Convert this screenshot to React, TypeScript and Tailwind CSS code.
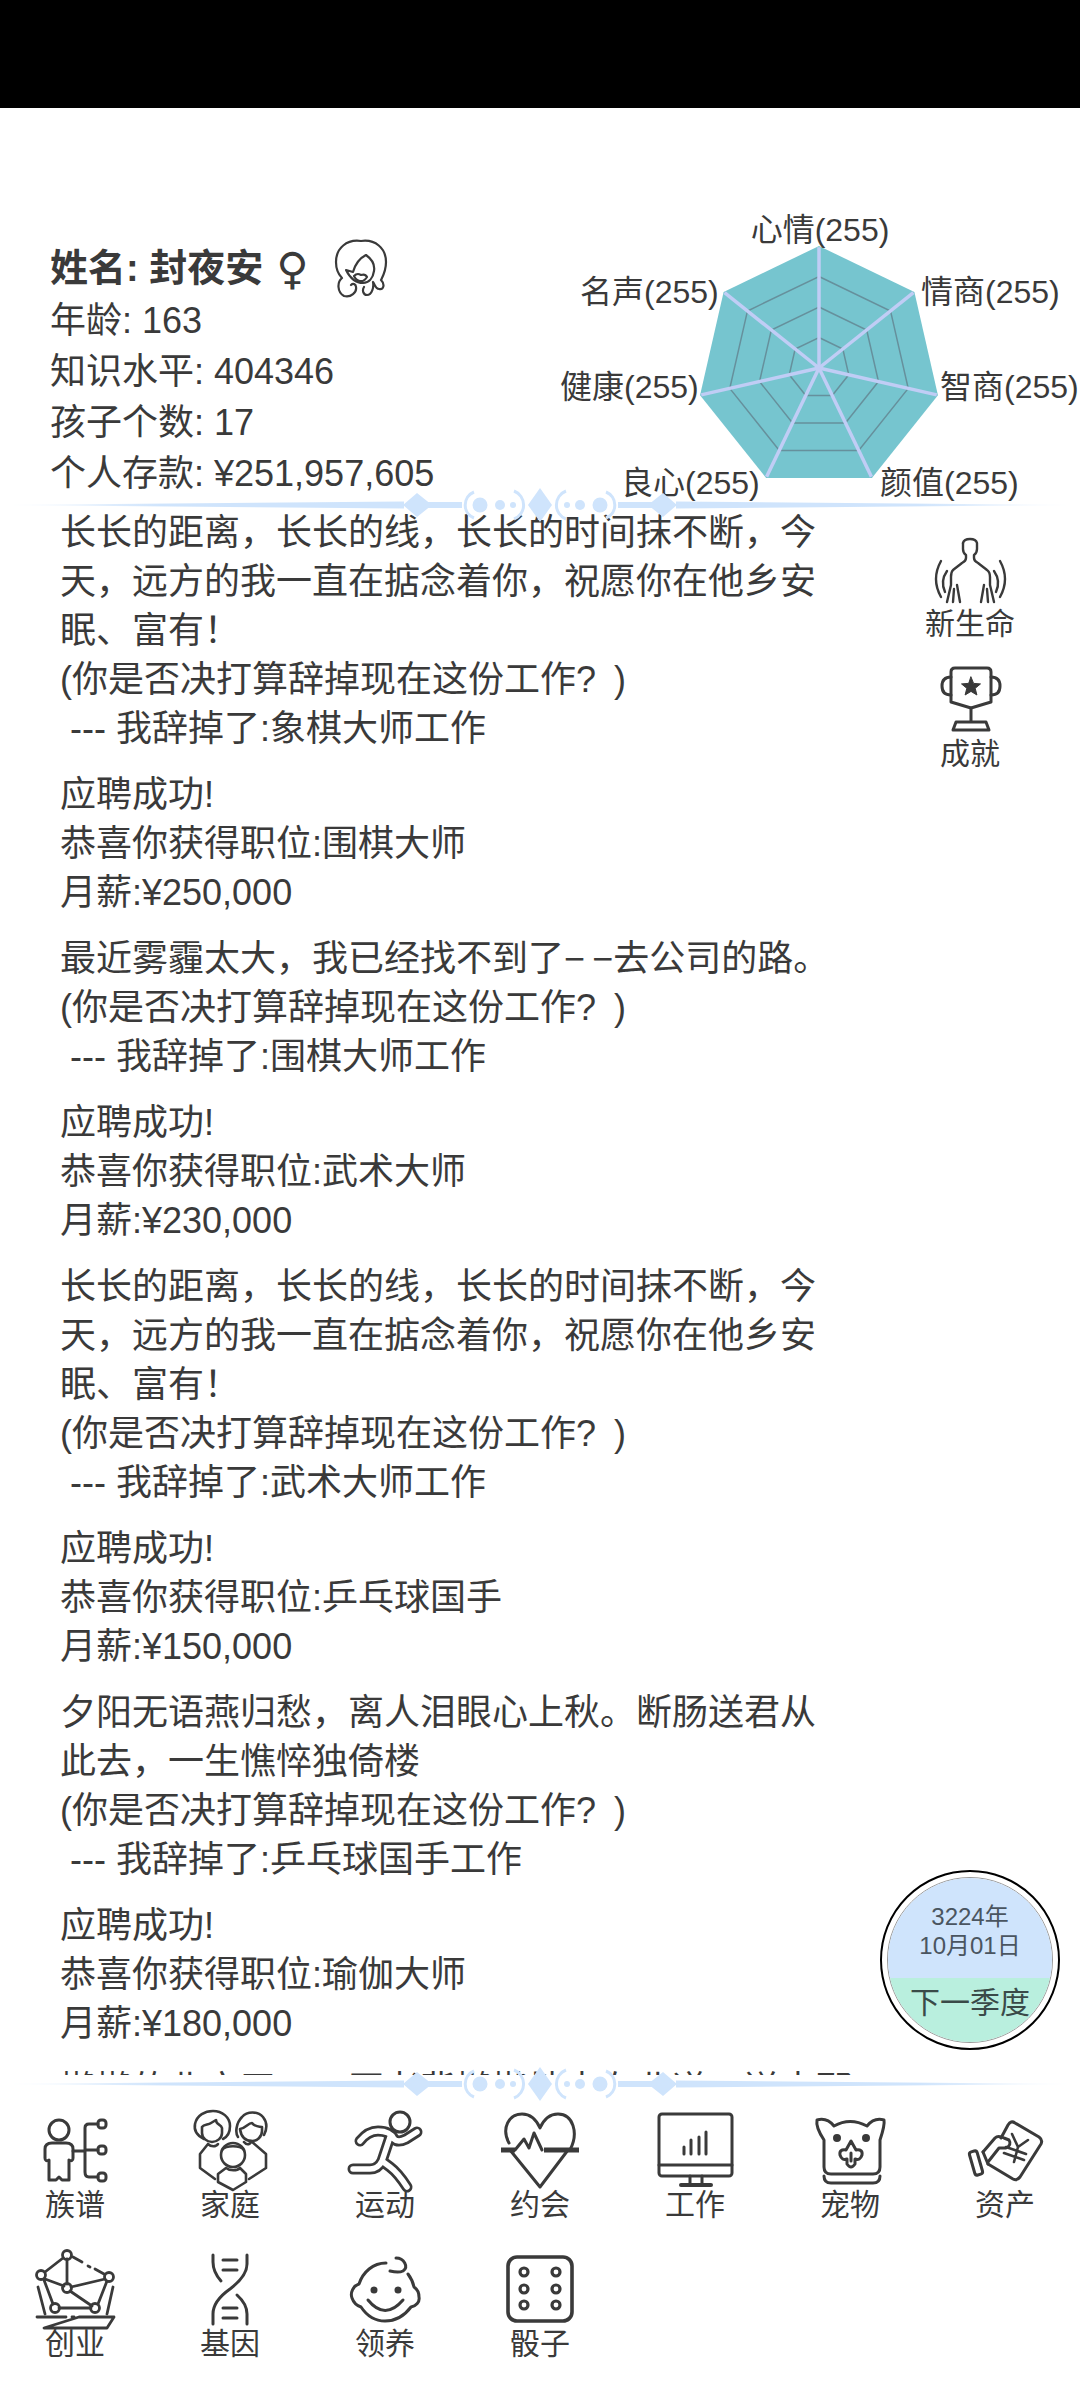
import type { ReactNode } from "react";

const RADAR_LABELS = [
  { text: "心情(255)", x: 280, y: 51, anchor: "middle" },
  { text: "情商(255)", x: 381, y: 113, anchor: "start" },
  { text: "智商(255)", x: 400, y: 208, anchor: "start" },
  { text: "颜值(255)", x: 340, y: 304, anchor: "start" },
  { text: "良心(255)", x: 81, y: 304, anchor: "start" },
  { text: "健康(255)", x: 20, y: 208, anchor: "start" },
  { text: "名声(255)", x: 40, y: 113, anchor: "start" },
];

const ASK = "(你是否决打算辞掉现在这份工作?\u2002)";

const LOG_BLOCKS = [
  ["长长的距离，长长的线，长长的时间抹不断，今", "天，远方的我一直在掂念着你，祝愿你在他乡安", "眠、富有！", ASK, " --- 我辞掉了:象棋大师工作"],
  ["应聘成功!", "恭喜你获得职位:围棋大师", "月薪:¥250,000"],
  ["最近雾霾太大，我已经找不到了−\u2009−去公司的路。", ASK, " --- 我辞掉了:围棋大师工作"],
  ["应聘成功!", "恭喜你获得职位:武术大师", "月薪:¥230,000"],
  ["长长的距离，长长的线，长长的时间抹不断，今", "天，远方的我一直在掂念着你，祝愿你在他乡安", "眠、富有！", ASK, " --- 我辞掉了:武术大师工作"],
  ["应聘成功!", "恭喜你获得职位:乒乓球国手", "月薪:¥150,000"],
  ["夕阳无语燕归愁，离人泪眼心上秋。断肠送君从", "此去，一生憔悴独倚楼", ASK, " --- 我辞掉了:乒乓球国手工作"],
  ["应聘成功!", "恭喜你获得职位:瑜伽大师", "月薪:¥180,000"],
  ["懒懒的北方天，一匹老背懒懒地走在北道，送走那"],
];

const CX = 279;
const CY = 178;
const R = 122;

const point = (i: number, scale: number) => {
  const a = (i * 2 * Math.PI) / 7;
  return [CX + R * scale * Math.sin(a), CY - R * scale * Math.cos(a)];
};

const ring = (scale: number) =>
  [0, 1, 2, 3, 4, 5, 6].map((i) => point(i, scale).join(",")).join(" ");

const Radar = () => (
  <svg width="540" height="320" viewBox="0 0 540 320" className="mt-[82px] shrink-0 overflow-visible">
    <polygon points={ring(1)} fill="#76c5cf" />
    {[0.25, 0.5, 0.75].map((s) => (
      <polygon key={s} points={ring(s)} fill="none" stroke="#66909c" strokeWidth="1.5" />
    ))}
    {[0, 1, 2, 3, 4, 5, 6].map((i) => {
      const [x, y] = point(i, 0.99);
      return <line key={i} x1={CX} y1={CY} x2={x} y2={y} stroke="#c0cdf5" strokeWidth="3.5" />;
    })}
    {RADAR_LABELS.map((l) => (
      <text key={l.text} x={l.x} y={l.y} textAnchor={l.anchor} fill="#3a3a3a" className="text-[32px]">
        {l.text}
      </text>
    ))}
  </svg>
);

// mirrored ornament; only the left half is described
const DividerHalf = ({ id }: { id: string }) => (
  <g>
    <polygon points="0,20 404,16.5 404,23.5" fill={`url(#${id})`} />
    <polygon points="403,20 417,8 432,20 417,32" fill="#cfe4fc" />
    <rect x="428" y="17" width="34" height="6" fill="#cfe4fc" />
    <path d="M474 7 A14 14 0 0 0 474 33" fill="none" stroke="#cfe4fc" strokeWidth="3" />
    <circle cx="480" cy="20" r="7.5" fill="#cfe4fc" />
    <circle cx="500" cy="20" r="5" fill="#cfe4fc" />
    <circle cx="513" cy="20" r="3" fill="#cfe4fc" />
    <path d="M514 6 A15 15 0 0 1 514 34" fill="none" stroke="#cfe4fc" strokeWidth="3" />
  </g>
);

const Divider = ({ id }: { id: string }) => (
  <div className="relative z-10 h-[2px]">
    <svg width="1080" height="40" viewBox="0 0 1080 40" className="absolute left-0 top-[-19px]">
      <defs>
        <linearGradient id={id} x1="0" x2="1" y1="0" y2="0">
          <stop offset="0" stopColor="#cfe4fc" stopOpacity="0" />
          <stop offset="0.4" stopColor="#cfe4fc" />
        </linearGradient>
      </defs>
      <DividerHalf id={id} />
      <g transform="matrix(-1 0 0 1 1080 0)">
        <DividerHalf id={id} />
      </g>
      <polygon points="540,3 552,20 540,37 528,20" fill="#cfe4fc" />
    </svg>
  </div>
);

const Ico = ({ w, h, sw = 3, children }: { w: number; h: number; sw?: number; children: ReactNode }) => (
  <svg
    width={w}
    height={h}
    viewBox={`0 0 ${w} ${h}`}
    fill="none"
    stroke="#3a3a3a"
    strokeWidth={sw}
    strokeLinecap="round"
    strokeLinejoin="round"
    className="overflow-visible"
  >
    {children}
  </svg>
);

const Avatar = () => (
  <Ico w={52} h={57} sw={2.2}>
    <path d="M26 1C12-1 1 8 1 22c0 8 3 13 6 16-5 4-5 14 2 18 7 2 13-4 12-9 0-3-3-4-5-2" />
    <path d="M26 1c14-2 25 7 25 21 0 9-3 14-5 18 4 4 3 10-2 9-4 0-4-5-6-7 1 5-1 13-6 13-4 0-5-5-3-8" />
    <path d="M31 15c-6 3-11 10-13 17l-7-2c4 8 9 13 17 13 6 0 10-5 11-12 1-6-1-11-8-16z" />
    <path d="M19 36c3-3 5-2 7-1 3-1 5 0 6 2-2 3-4 5-7 4-3 0-5-3-6-5z" />
  </Ico>
);

const PersonIcon = () => (
  <Ico w={75} h={64} sw={2.4}>
    <path d="M30 4Q31 0 37 0T44 4V10Q44 14 41 16V19Q41 22 45 24L54 31Q57 33 57 38V46L61 63" />
    <path d="M30 4V10Q30 14 33 16V19Q33 22 29 24L20 31Q18 33 18 38V46L14 63" />
    <path d="M51 46L48 63M54 50L55 63M24 46L27 63M21 50L20 63" />
    <path d="M8 22Q-2 40 8 58M14 32Q7 42 12 53M67 22Q77 40 67 58M61 32Q68 42 63 53" />
  </Ico>
);

const TrophyIcon = () => (
  <Ico w={59} h={65}>
    <path d="M10 6Q10 2 14 2H46Q50 2 50 6V36L30 42L10 36Z" />
    <path d="M10 11Q1 11 1 20T10 29M50 11Q59 11 59 20T50 29" />
    <path d="M30 42V56M15 56H45L48 64H12Z" />
    <path
      fill="#3a3a3a"
      strokeWidth="1"
      d="M30 11L32.6 17.4L39.5 17.9L34.2 22.3L35.9 29L30 25.4L24.1 29L25.8 22.3L20.5 17.9L27.4 17.4Z"
    />
  </Ico>
);

const ClanIcon = () => (
  <Ico w={63} h={63}>
    <circle cx="15" cy="11" r="10" />
    <path d="M8 24H22Q29 24 29 30V39Q29 43 25 41V61H18L15 58L12 61H5V41Q1 43 1 39V30Q1 24 8 24Z" />
    <path d="M29 32H41M54 5H45Q41 5 41 9V53Q41 58 45 58H54M41 31H54" />
    <rect x="54" y="1" width="8" height="8" rx="3" />
    <rect x="54" y="27" width="8" height="8" rx="3" />
    <rect x="54" y="54" width="8" height="8" rx="3" />
  </Ico>
);

const FamilyIcon = () => (
  <Ico w={73} h={79} sw={2.6}>
    <path d="M10 28C2 24 0 18 1 13C3 4 11 0 19 0C28 0 36 6 36 15C36 22 33 26 29 28" />
    <path d="M8 16C10 13 14 14 17 12L22 9C22 14 27 13 28 17V22C28 27 23 31 18 31C13 31 8 27 8 22Z" />
    <path d="M44 26C41 22 42 12 48 6C53 0 64 0 69 6C73 11 73 18 70 24" />
    <path d="M46 18C52 17 54 12 58 12C60 15 66 16 68 16V20C68 26 63 30 58 30C51 30 47 25 46 18Z" />
    <circle cx="39" cy="44" r="12" />
    <path d="M28 39C32 34 46 34 50 39" />
    <path d="M14 33L6 43V57L21 68M14 33C17 36 22 36 24 33" />
    <path d="M57 30L72 43V57L55 68M50 31C53 35 57 33 57 30" />
    <path d="M32 57L24 63V71L39 79L52 71V63L46 57C43 60 36 60 32 57Z" />
  </Ico>
);

const limbs =
  "M12 30Q20 20 30 20Q42 20 46 28Q50 32 58 28L69 21M42 26L34 50L42 56Q50 62 59 76M34 50Q30 58 22 58H5";

const RunIcon = () => (
  <svg width="75" height="79" viewBox="0 0 75 79" fill="none" strokeLinecap="round" strokeLinejoin="round" className="overflow-visible">
    <circle cx="52" cy="11" r="10" stroke="#3a3a3a" strokeWidth="3" />
    <path d={limbs} stroke="#3a3a3a" strokeWidth="11" />
    <path d={limbs} stroke="#ffffff" strokeWidth="5.5" />
  </svg>
);

const HeartIcon = () => (
  <Ico w={80} h={75}>
    <path d="M9 30C1 15 9 1 22 1C30 1 36 6 40 15C44 6 50 1 58 1C73 1 79 20 70 37" />
    <path d="M10 37L40 74L68 37" />
    <path d="M15 37L24 26L29 35L34 20L42 37" />
    <path d="M1 37H15M44 37H79" strokeWidth="5" strokeLinecap="butt" />
  </Ico>
);

const MonitorIcon = () => (
  <Ico w={75} h={74}>
    <rect x="1" y="1" width="73" height="62" rx="3" />
    <path d="M1 52H74M32 63V72M44 63V72" />
    <path d="M23 72H53" strokeWidth="4" />
    <path d="M26 34V41M33 27V41M41 24V41M48 19V41" />
  </Ico>
);

const PetIcon = () => (
  <Ico w={69} h={66}>
    <path d="M8 23C2 14 0 8 1 3C8 1 14 4 18 9Q34 0 51 9C55 4 61 1 68 3C69 8 67 14 64 23V50Q64 57 57 57H15Q8 57 8 50Z" />
    <path d="M8 59Q8 66 15 66H57Q64 66 64 59" />
    <circle cx="21" cy="21" r="2.5" fill="#3a3a3a" />
    <circle cx="50" cy="21" r="2.5" fill="#3a3a3a" />
    <path d="M35 24L30 33Q23 32 24 38Q26 44 31 42V47Q35 53 39 47V42Q44 44 46 38Q47 32 40 33Z" />
    <path d="M35 36V44" />
  </Ico>
);

const AssetIcon = () => (
  <Ico w={74} h={60}>
    <path d="M33 18L40 5Q43 0 47 3L71 17Q75 20 73 24L52 57Q49 61 45 59L20 44" />
    <path d="M15 32L27 18Q30 15 36 18L41 20Q44 25 38 28H31L20 42" />
    <path d="M15 32L20 44" />
    <rect x="4" y="31" width="8" height="24" rx="2.5" transform="rotate(-16 8 43)" />
    <path d="M44 14L50 27L60 20M50 27L46 42M38 27L58 34M36 33L56 40" strokeWidth="2.6" />
  </Ico>
);

const StartupIcon = () => (
  <Ico w={79} h={79} sw={2.8}>
    <path d="M31 9V34M27 8L9 22M9 29L28 36M8 30L17 54M35 37L69 29M34 41L56 56M23 58H55M71 31L62 54" />
    <path d="M37 7L46 12M52 16L54 17M59 19L68 24" />
    <circle cx="31" cy="5" r="4.5" />
    <circle cx="73" cy="27" r="4.5" />
    <circle cx="5" cy="25" r="4.5" />
    <circle cx="31" cy="38" r="4.5" />
    <circle cx="19" cy="58" r="4.5" />
    <circle cx="59" cy="58" r="4.5" />
    <path d="M2 37L9 64M77 37L71 64" />
    <path d="M1 67H30M36 67H38M43 67H78L71 78H8Z" />
  </Ico>
);

const DnaIcon = () => (
  <Ico w={38} h={70}>
    <path d="M2 1V8Q2 18 10 27" />
    <path d="M36 1V10Q36 22 19 35Q2 47 2 60V70" />
    <path d="M26 41Q36 50 36 60V70" />
    <path d="M12 6H26M12 16H26M12 54H26M12 64H26" />
  </Ico>
);

const BabyIcon = () => (
  <Ico w={69} h={64}>
    <path d="M45 1C53 1 58 10 52 14C48 16 43 15 39 14" />
    <path d="M35 6C22 6 12 15 8 27C2 29 -1 36 1 41C3 47 7 49 10 50C16 59 24 64 34 64C46 64 54 58 60 50C65 49 69 45 68 40C68 35 66 32 63 30C62 25 60 21 57 17" />
    <circle cx="23" cy="33" r="3.5" fill="#3a3a3a" stroke="none" />
    <circle cx="47" cy="33" r="3.5" fill="#3a3a3a" stroke="none" />
    <path d="M17 43Q34 64 52 43" />
  </Ico>
);

const DiceIcon = () => (
  <Ico w={68} h={68} sw={3.6}>
    <rect x="2" y="2" width="64" height="64" rx="9" />
    {[17, 34, 50].map((y) => (
      <g key={y}>
        <circle cx="18" cy={y} r="4" strokeWidth="3.2" />
        <circle cx="50" cy={y} r="4" strokeWidth="3.2" />
      </g>
    ))}
  </Ico>
);

const NAV_ITEMS: [string, ReactNode][] = [
  ["族谱", <ClanIcon />],
  ["家庭", <FamilyIcon />],
  ["运动", <RunIcon />],
  ["约会", <HeartIcon />],
  ["工作", <MonitorIcon />],
  ["宠物", <PetIcon />],
  ["资产", <AssetIcon />],
  ["创业", <StartupIcon />],
  ["基因", <DnaIcon />],
  ["领养", <BabyIcon />],
  ["骰子", <DiceIcon />],
];

export default function App() {
  return (
    <div className="relative h-[2400px] w-[1080px] overflow-hidden bg-white font-['Liberation_Sans','Noto_Sans_CJK_SC',sans-serif] text-[#3a3a3a]">
      <div className="h-[108px] bg-black" />

      <header className="flex h-[396px] justify-between">
        <div className="pl-[50px] pt-[134px] text-[36px] leading-[51px]">
          <div className="flex h-[53px] items-center text-[38px] font-bold">
            <span>姓名: 封夜安</span>
            <span className="ml-[13px] font-['DejaVu_Sans',sans-serif] text-[44px] font-normal">♀</span>
            <span className="ml-[27px]">
              <Avatar />
            </span>
          </div>
          <div>年龄: 163</div>
          <div>知识水平: 404346</div>
          <div>孩子个数: 17</div>
          <div>个人存款: ¥251,957,605</div>
        </div>
        <Radar />
      </header>

      <Divider id="fade-top" />

      <main className="relative flex h-[1577px]">
        <div className="h-[1569px] w-[860px] shrink-0 overflow-hidden pl-[60px] pt-[2px] text-[36px] leading-[49px]">
          {LOG_BLOCKS.map((block, i) => (
            <div key={i} className="mb-[17px] whitespace-pre">
              {block.map((line, j) => (
                <div key={j}>{line}</div>
              ))}
            </div>
          ))}
        </div>

        <aside className="flex w-[220px] flex-col items-center pt-[33px] text-[30px] leading-[36px]">
          <PersonIcon />
          <div className="mt-[3px]">新生命</div>
          <div className="mt-[24px]">
            <TrophyIcon />
          </div>
          <div className="mt-[5px]">成就</div>
        </aside>

        <button className="absolute left-[880px] top-[1364px] h-[180px] w-[180px] rounded-full border-2 border-black bg-white p-[5px]">
          <span className="flex h-full w-full flex-col overflow-hidden rounded-full border-[1.5px] border-[#999999]">
            <span className="flex h-[100px] flex-col justify-end bg-[#cfe4fc] pb-[18px] text-[24px] leading-[29px] text-[#4a5560]">
              <span>3224年</span>
              <span>10月01日</span>
            </span>
            <span className="flex-1 bg-[#b9efde] pt-[5px] text-[30px] leading-[40px] text-[#3a4a48]">下一季度</span>
          </span>
        </button>
      </main>

      <Divider id="fade-bottom" />

      <nav className="grid grid-cols-[repeat(7,155px)] justify-center pt-[25px] text-[30px] leading-[30px]">
        {NAV_ITEMS.map(([label, icon]) => (
          <div key={label} className="flex h-[139px] flex-col items-center">
            <div className="flex h-[80px] items-center justify-center">{icon}</div>
            <div>{label}</div>
          </div>
        ))}
      </nav>
    </div>
  );
}
